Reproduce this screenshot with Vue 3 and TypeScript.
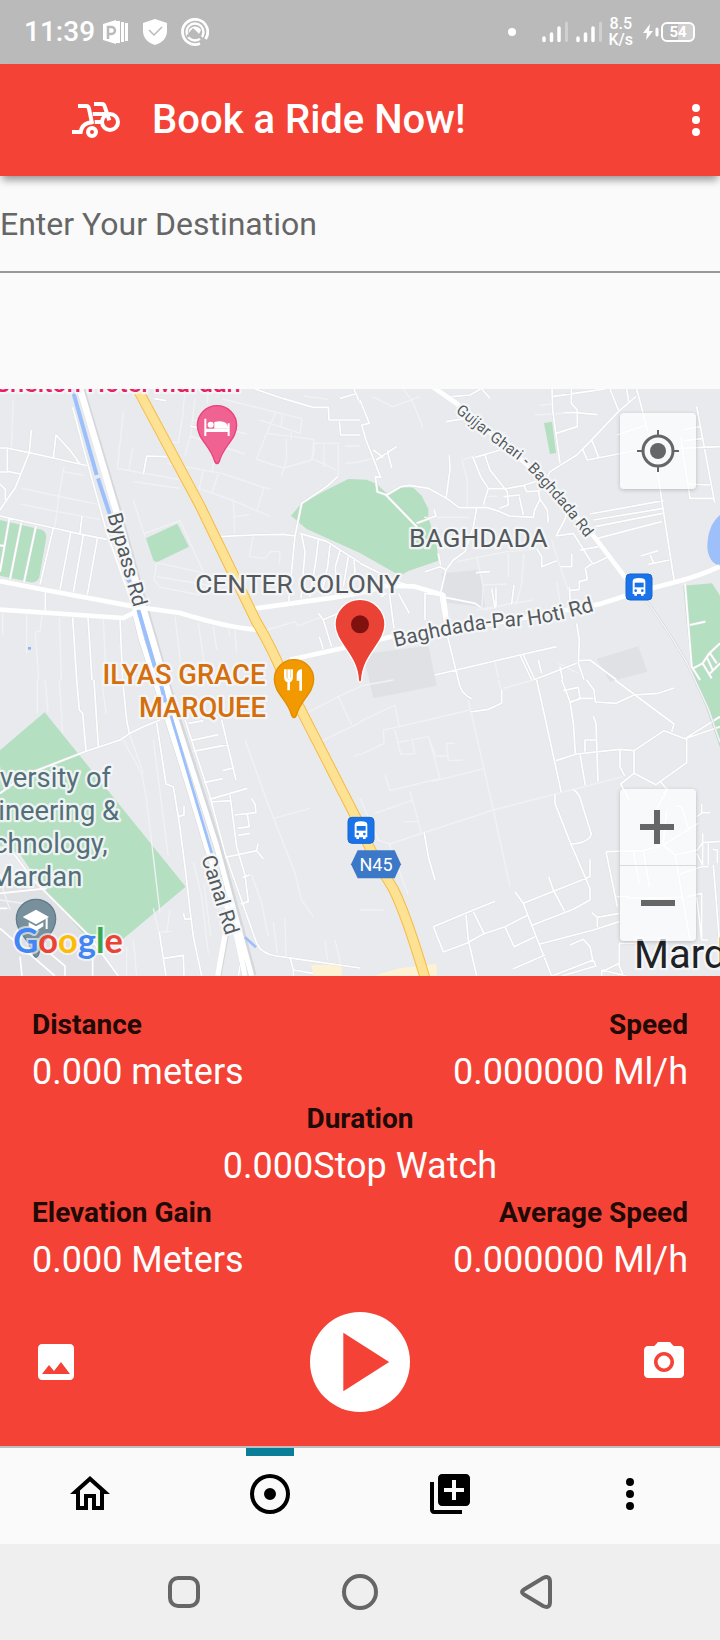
<script setup lang="ts">
import { ref } from 'vue'

interface Stat {
  label: string
  value: string
  place: 'start' | 'center' | 'end'
}

interface Tab {
  name: string
  icon: string
}

interface MapSheet {
  shift: string
  roads: string
  lanes: string
}

const destination = ref('')
const activeTab = ref('Track')

const stats: Stat[] = [
  { label: 'Distance', value: '0.000 meters', place: 'start' },
  { label: 'Speed', value: '0.000000 Ml/h', place: 'end' },
  { label: 'Duration', value: '0.000Stop Watch', place: 'center' },
  { label: 'Elevation Gain', value: '0.000 Meters', place: 'start' },
  { label: 'Average Speed', value: '0.000000 Ml/h', place: 'end' },
]

const moreIcon =
  'M12 8a2 2 0 1 0 0-4 2 2 0 0 0 0 4zm0 2a2 2 0 1 0 0 4 2 2 0 0 0 0-4zm0 6a2 2 0 1 0 0 4 2 2 0 0 0 0-4z'

const tabs: Tab[] = [
  {
    name: 'Home',
    icon: 'M12 5.69l5 4.5V18h-2v-6H9v6H7v-7.81l5-4.5M12 3L2 12h3v8h6v-6h2v6h6v-8h3L12 3z',
  },
  {
    name: 'Track',
    icon: 'M12 2a10 10 0 1 0 0 20 10 10 0 0 0 0-20zm0 18a8 8 0 1 1 0-16 8 8 0 0 1 0 16zm3-8a3 3 0 1 1-6 0 3 3 0 0 1 6 0z',
  },
  {
    name: 'Add',
    icon: 'M4 6H2v14c0 1.1.9 2 2 2h14v-2H4V6zm16-4H8c-1.1 0-2 .9-2 2v12c0 1.1.9 2 2 2h12c1.1 0 2-.9 2-2V4c0-1.1-.9-2-2-2zm-1 9h-4v4h-2v-4H9V9h4V5h2v4h4v2z',
  },
  { name: 'More', icon: moreIcon },
]

// The map is drawn as four adjoining sheets: north-west, north-east, south-west, south-east.
const sheets: MapSheet[] = [
  {
    shift: 'translate(0 -27)',
    roads:
      'M94 150L88 218L45 325L20 360L0 390 M0 204H20L88 218L160 234L265 258 M160 234L168 165L208 208L238 250 M22 204V274L62 282 M0 276H22 M0 312L16 328V360 M0 408L160 444L248 464L320 478 M246 408L240 460 M28 416L0 575 M64 428L30 598 M108 438L72 606 M160 444L120 614 M212 458L180 628 M250 466L220 636 M292 476L262 644 M0 496L14 498 M430 284L440 228L500 230 M136 634V690 M218 712L230 900 M264 714L276 900 M360 716L368 900 M655 470L760 465L850 463L885 468L905 370L980 320L1015 288 M885 468L866 664 M900 460L980 484L1080 548 M905 465L915 515L903 655 M955 480L948 540L930 650 M990 495L983 560L965 640 M1020 512L1006 560L1012 655 M1045 530L1030 620 M1062 540L1066 590 M765 27L850 56L940 82H985L987 120H1080 M1018 125L1022 165H1080 M1062 27L1080 70 M1020 55L1065 42 M955 700L970 720L995 800 M968 720L1015 700 M958 770L970 808 M570 138L600 145 M463 56L498 62',
    lanes:
      'M40 60L34 204 M370 98L352 265L535 298 M398 205L386 272 M350 265L430 280 M400 305L540 325 M500 250L665 280L790 322L812 326 M610 270L598 326L700 362L812 410 M655 282L635 340 M700 362L704 460 M792 322L770 394 M704 410L748 404 M555 27L548 105L535 188L480 186 M625 27L622 70 M585 55L572 165L555 226 M575 118L700 152L740 162 M570 168L735 222 M648 210L635 280 M668 57L905 116 M828 95L800 160L770 238L850 264L935 240L942 178L800 160 M848 100L843 142 M906 115L900 160L780 120 M875 150L873 180 M858 175L860 235L845 288 M940 182L944 214L936 236L1010 270 M910 48L985 58 M940 190H1020 M972 195V262 M1015 195V285 M1035 198H1080 M1035 250L1080 246 M66 325L200 354L300 374 M62 372L168 394L300 418 M192 260L176 350L165 440 M190 275L252 286 M400 360L435 470 M435 460L540 422L610 575 M470 548L605 578 M470 548L462 600L480 622L600 645 M470 590L640 618 M760 465L748 530L795 535L812 515H840L838 550 M525 710L542 850 M595 728L612 845 M640 738L650 810 M685 748L690 770 M705 750L710 815 M800 750L885 725L895 738L965 710 M8 700V765 M80 705V820 M126 707L120 754L106 756L116 900 M178 710L184 900 M310 715L318 900 M360 790L365 850',
  },
  {
    shift: 'translate(1080 -27)',
    roads:
      'M0 60L28 130L5 135L18 180L62 292L46 290L52 335L80 345L122 320L150 316L205 325L262 356L297 383L380 382L420 395L448 408L520 412L524 390L540 358L535 330 M78 345L170 440L150 490 M170 430L228 408L222 388 M48 240L110 200 M40 210L70 232 M82 212L95 264 M268 226L270 270L258 356 M258 125L350 110 M390 55L365 27 M275 50L330 45L362 27 M576 27L578 90L600 250 M634 27V70L652 90V140L588 160 M576 50L680 35L735 27 M610 98H648L712 104 M750 27L775 90 M800 27L806 65 M830 27L860 140L895 290L908 380L943 605 M828 50L775 95L690 185L650 225L570 275L540 330 M696 182L716 232 M668 208L682 240L835 210 M770 165L860 135 M1010 80L1064 368 M955 205L1080 200 M962 170L990 355H1064 M968 150L1020 140 M972 182L1030 175 M980 312L1050 315 M338 230L362 290L385 325L370 375 M375 226L390 270L442 335L445 375L418 385 M345 232L420 210 M385 325L440 326L492 316L540 300 M492 316L500 335L540 333 M430 350L480 345 M478 350L490 405 M540 358L562 390L565 428 M350 385L340 440L315 515L280 540L258 570L240 645L258 750L295 900 M195 575L240 560L258 570 M235 520L242 556 M588 468L640 460L690 540L700 552L750 528 M588 468L614 420L620 398 M660 510L715 500 M690 402L910 362 M700 420L910 385 M705 440L908 400 M712 475L905 425 M842 528L895 512 M870 525L882 550 M865 553L928 540 M530 505L545 530V560L590 542 M600 560H635V522 M695 552L676 565L682 598L658 605V628L628 632 M628 620L632 690 M0 550L100 600L155 620 M88 640L102 745 M62 650L80 640 M115 640L148 700 M62 617L70 650 M195 640V720 M192 640L244 646 M244 650L345 670L362 682 M395 625L405 685 M408 625V680 M348 578L390 575 M462 615L455 672 M225 885L480 825L590 800 M480 825L515 900 M490 825L525 900 M535 840L545 880 M600 860L608 900 M520 900L650 850 M650 730L658 780L655 850L672 900 M655 842L690 840L770 900 M975 610L995 860L1020 900 M990 735L1036 725 M1000 865L1028 850L1048 820L1080 790 M1028 850L1055 895 M1040 830L1058 870 M1050 820L1070 850 M1050 880L1080 850',
    lanes:
      'M38 50L98 80L180 50 M130 27L158 65L188 142 M0 245L40 235 M305 238L322 300V380 M310 238L345 228 M525 105L650 98 M540 75L580 72 M405 170L440 155 M192 412L330 412 M375 380V350L412 348 M290 545L440 515L520 508 M350 530L370 620L365 690 M445 520V590 M492 520L485 610L470 670 M370 615L440 612 M350 690L520 660 M575 480L600 560L632 650 M590 605L600 665 M375 690L470 665 M405 845L415 895 M595 850L655 880',
  },
  {
    shift: 'translate(0 873)',
    roads:
      'M230 0L238 90L248 100L258 212 M282 0L295 200 M368 0L380 120L388 160 M0 340L75 285L258 214L360 180L390 160L430 140L480 120 M470 128L498 312L520 320L538 430L555 560L570 690L580 770L605 888 M535 410L552 405V378 M550 700L555 718L572 716 M722 672L745 665L735 585L710 500L690 345 M565 130L610 122 M572 182L655 164 M580 214L684 194 M665 120L708 300 M668 272L698 264 M612 308L668 296 M628 358L742 325 M632 366L690 362 M704 405L768 398L765 372L754 355 M742 402L748 440L712 445 M714 466L750 460 M675 532L770 512L790 536 M770 512L774 490 M728 592L750 584 M40 520L100 600L265 765L355 888 M0 640L140 625 M0 685H22 M0 745L165 888 M150 820L195 858V888 M60 830L66 888 M278 830V888 M260 765L272 800 M490 835L498 888 M490 835L550 826L552 888 M478 755L482 785L490 835 M715 888L722 850 M870 832L880 870V888 M880 870L940 880 M555 120L630 350L675 520L770 790Q785 822 830 828L900 838L1080 864',
    lanes:
      'M112 0V100 M135 0L144 95 M178 0L188 160 M305 0L318 100 M370 180L425 280L440 360L480 700 M388 160L430 280 M460 180L505 530 M580 545L605 650L625 820 M612 610L632 770 M755 585L785 670L805 770 M735 180L800 360L885 580L905 660L940 710 M820 415L930 385 M820 725L832 820 M855 715L858 830 M975 780L982 840 M1005 780L1022 850 M460 685L482 780 M510 690L500 760 M478 756L515 754 M380 800V888 M400 780L410 888 M915 102L1015 50L1080 20 M1015 50L1055 135 M950 190L1080 128 M1060 230L1080 222 M0 600L30 690 M0 660L140 680',
  },
  {
    shift: 'translate(1080 873)',
    roads:
      'M295 0Q300 40 335 56 M330 96L385 88L425 70V30 M530 0L550 90L604 338 M605 0L630 65L640 130L646 220 M610 32L655 22L660 55L630 68 M680 0L702 30L706 66L768 70L822 45L895 40L942 24 M765 0L942 132L935 155 M630 66L665 55H700 M588 242L650 222L780 208L822 212L912 152L975 176L1080 110 M975 176L1080 140 M980 176V248L888 314L822 280V212 M822 280L782 312L808 358 M902 305L922 330L890 385 M780 210V260L794 288 M700 108L708 130L714 305 M675 215V180H710 M660 222L676 316 M585 342V370L632 490L690 625V660L640 688L518 735 M638 328Q660 340 665 370L694 462Q685 490 632 492 M690 538L690 590L490 670L465 635 M566 590L580 630L614 694 M490 670L505 710L575 888 M220 740L340 690L405 664 M220 740L250 816L320 790L370 762L435 740L505 704 M340 695L372 760 M318 705L325 780L350 888 M435 740L462 800L525 770 M540 792L700 750L778 725 M630 795L670 778L690 800L698 840 M460 866L555 825 M575 888L700 840L708 858L605 888 M695 698L712 712L778 700 M712 712V742 M738 515L850 512L910 495L1015 430 M738 515L772 680 M850 512L868 620 M820 515L838 610 M910 495L945 525L990 780 M945 525L1012 510 M770 650H808 M960 582L1025 560H1046 M980 650L1025 640V780H1045 M945 378L965 380L985 445 M920 390L910 490 M925 325L910 340 M1010 410L1028 398H1050 M1025 372V400 M1010 512L1028 488L1080 484 M1028 460V555 M1010 520L1028 555 M1045 490V555 M1060 555L1078 780 M1058 508L1072 510V550 M1010 650L1025 780 M804 655L965 652 M778 790V850L725 875 M778 790H830 M725 888V870L800 888 M775 850L790 888 M192 455L205 530L225 600',
    lanes:
      'M0 125L105 75L118 140L70 150L72 190L0 225 M0 18L100 0 M105 150L122 222H165L155 175 M110 188L205 170L240 295L90 332L75 285 M205 170L228 228H262 M215 305L375 265 M118 140L330 90 M285 190H260L265 242L308 240 M0 355L55 480L88 492L145 645 M45 400L155 362L150 335 M150 335L185 460 M130 425H175 M88 492L400 390L790 290 M325 60L400 390L450 620 M430 25L520 0 M425 30L415 0 M0 690L70 690',
  },
]

const busStops: string[] = ['translate(1878 555)', 'translate(1044 1285)']
</script>

<template>
  <div class="phone">
    <div class="status">
      <span class="clock">11:39</span>
      <svg class="status-icon" viewBox="0 0 28 28" aria-hidden="true">
        <path d="M2 6l13-4v24L2 22z" fill="#fff" />
        <path d="M15 3h4v22h-4zM20 4h3v20h-3zM24 5h3v18h-3z" fill="#fff" />
        <path d="M7 21V9h3.500a3.500 3.500 0 0 1 0 7H7" fill="none" stroke="#bababa" stroke-width="2.500" />
      </svg>
      <svg class="status-icon shield" viewBox="0 0 28 28" aria-hidden="true">
        <path d="M14 1l12 4v8c0 7-5 12-12 14C7 25 2 20 2 13V5z" fill="#fff" />
        <path d="M8 12l5 5 8-8" fill="none" stroke="#bababa" stroke-width="1.500" />
      </svg>
      <svg class="status-icon" viewBox="0 0 28 28" fill="none" stroke="#fff" aria-hidden="true">
        <path d="M19 25.500A12.600 12.600 0 1 1 24.500 21" stroke-width="2.800" />
        <circle cx="14" cy="14" r="8.500" stroke-width="2.400" />
        <path d="M7 18l6-7 5 5 2-4a7 7 0 0 0-12 0z" fill="#fff" stroke="none" />
        <path d="M6 19l6-7 13 13" stroke="#bababa" stroke-width="2.600" />
      </svg>
      <span class="spacer"></span>
      <span class="dot"></span>
      <svg v-for="n in 2" :key="n" class="signal" viewBox="0 0 26 22" aria-hidden="true">
        <path d="M2 17v2.500M9.500 13v6.500M17 7v12.500" stroke="#fff" stroke-width="3.500" stroke-linecap="round" />
        <path d="M24.500 2v17.500" stroke="#d0d0d0" stroke-width="3" stroke-linecap="round" />
      </svg>
      <span class="rate">8.5<br />K/s</span>
      <svg class="bolt" viewBox="0 0 16 18" aria-hidden="true">
        <path d="M7 1L0 10h4l-1 7 7-9H6z" fill="#fff" />
        <path d="M14 6v6" stroke="#fff" stroke-width="3" stroke-linecap="round" />
      </svg>
      <span class="battery">54</span>
    </div>

    <header class="app-bar">
      <svg class="brand" viewBox="0 0 144 144" fill="none" stroke="#fff" stroke-width="12" aria-hidden="true">
        <path d="M18 30h25q6 0 8 8l9 44M66 24h24q6 0 8 7l14 42" />
        <path d="M62 54h44M68 78h22M0 108h26q4-22 22-27l16-3" />
        <circle cx="114" cy="78" r="24" />
        <circle cx="60" cy="108" r="12" />
      </svg>
      <h1>Book a Ride Now!</h1>
      <button class="plain" type="button" aria-label="Menu">
        <svg class="icon" viewBox="0 0 24 24" fill="#fff"><path :d="moreIcon" /></svg>
      </button>
    </header>

    <main>
      <input
        v-model="destination"
        class="destination"
        type="text"
        placeholder="Enter Your Destination"
        aria-label="Enter Your Destination"
      />

      <section class="map" aria-label="Map">
        <svg class="map-canvas" viewBox="0 0 2160 1761" preserveAspectRatio="xMidYMid slice">
          <defs>
            <path id="bypass" d="M322 378L398 646" />
            <path id="canal" d="M604 1406L676 1636" />
            <path id="gujjar" d="M1366 68L1470 153L1560 218L1600 258L1680 348L1756 444" />
            <path id="hoti" d="M1186 774Q1280 750 1380 732T1560 711T1800 660" />
            <g id="bus">
              <rect width="78" height="78" rx="12" fill="#1a73e8" stroke="#1765cc" stroke-width="3" />
              <path d="M20 60V22q0-10 19-10t19 10v38h-5v5h-8v-5H33v5h-8v-5z" fill="#fff" />
              <path d="M26 26h27v14H26z" fill="#1a73e8" />
              <circle cx="29" cy="50" r="4" fill="#1a73e8" />
              <circle cx="49" cy="50" r="4" fill="#1a73e8" />
            </g>
            <path id="pin" d="M0-59a59 59 0 0 1 59 59C59 42 18 62 7 108q-7 14-14 0C-18 62-59 42-59 0A59 59 0 0 1 0-59z" />
          </defs>

          <g class="park">
            <path d="M0 393L125 422Q142 430 138 450L118 565Q112 582 92 580L0 560z" />
            <path d="M438 448L532 404L567 473L470 520L460 514z" />
            <path
              d="M873 380L906 342L985 300L1045 270L1100 272L1130 285L1165 318L1200 293L1240 296L1265 320L1285 360V385L1310 465L1315 515L1225 546L1200 560L1080 492L920 420z"
            />
            <path d="M1632 102L1656 98L1668 192L1650 195z" />
            <path d="M2050 590L2136 583L2160 620V873H2085L2075 840L2060 700z" />
            <path d="M2085 873H2160V1075L2120 960z" />
            <path d="M0 1084L134 970L557 1493L370 1649L262 1650L130 1500L60 1395L0 1370z" />
          </g>
          <g class="block">
            <path d="M1325 553L1440 542L1455 655L1330 640z" />
            <path d="M1090 795L1285 770L1310 890L1120 928z" />
            <path d="M1790 810L1915 772L1942 848L1830 878z" />
            <path d="M0 1480L80 1440L255 1640L355 1761H0z" />
          </g>
          <path d="M2160 378Q2122 410 2122 475Q2125 520 2160 532z" fill="#9dc0fa" />
          <path d="M934 1728H1025V1761H940zM1130 1757L1200 1738L1310 1724V1761H1130z" fill="#fdf3d4" />
          <path d="M84 774h9v8h-9z" fill="#8ab4f8" />

          <g v-for="sheet in sheets" :key="sheet.shift" :transform="sheet.shift">
            <path class="lane" :d="sheet.lanes" />
            <path class="road-edge" :d="sheet.roads" />
            <path class="road" :d="sheet.roads" />
          </g>

          <path class="trunk-edge" d="M242 0L353 370L433 660L497 880L528 983L583 1153L653 1373L723 1633L757 1761" />
          <path class="trunk-edge slim" d="M402 660L425 753L500 983L560 1173L620 1373L710 1633L735 1761M678 1633L655 1761" />
          <path class="road-edge" d="M218 55L265 230L320 430" />
          <path class="road" d="M218 55L265 230L320 430L402 660" />
          <path class="trunk" d="M240 0L350 370L430 660L495 880L525 983" />
          <path class="trunk slim" d="M525 983L580 1153L650 1373L720 1633L755 1761M402 660L425 753L500 983L560 1173L620 1373L708 1633L735 1761M676 1633L653 1761" />
          <path class="canal" d="M217 0L290 258M294 268L330 378M384 570L390 580M415 663L465 835M484 890L496 940" />
          <path class="canal thin" d="M513 980L572 1180L635 1392M735 1645L768 1675" />

          <g class="main-road">
            <path d="M0 576L120 600L400 652L540 672Q680 715 768 722" />
            <path d="M0 662L370 687L400 672" />
            <path d="M755 660L1000 626L1080 612L1160 590L1240 592L1330 618L1345 735" />
            <path d="M870 812L1040 775L1180 742L1440 710L1800 645L1910 610L2030 578Q2100 560 2160 532" />
            <path d="M1300 -5L1368 42L1620 260L1780 440L1910 610" />
          </g>
          <path d="M1920 610Q1990 700 2060 820L2125 960L2160 1060" fill="none" stroke="#d2d4d7" stroke-width="7" />
          <path d="M1920 610Q1990 700 2060 820L2125 960L2160 1060" fill="none" stroke="#f4f5f6" stroke-width="4" />

          <path class="highway-edge" d="M410 -5L600 350L770 700Q815 775 850 860L1070 1290Q1100 1370 1180 1500Q1220 1580 1276 1770" />
          <path class="highway" d="M410 -5L600 350L770 700Q815 775 850 860L1070 1290Q1100 1370 1180 1500Q1220 1580 1276 1770" />

          <g class="label">
            <text x="722" y="9" text-anchor="end" class="hotel">Shelton Hotel Mardan</text>
            <text class="street"><textPath href="#bypass">Bypass Rd</textPath></text>
            <text class="street"><textPath href="#canal">Canal Rd</textPath></text>
            <text class="street fine"><textPath href="#gujjar">Gujjar Ghari - Baghdada Rd</textPath></text>
            <text class="street"><textPath href="#hoti">Baghdada-Par Hoti Rd</textPath></text>
            <text x="1435" y="475" text-anchor="middle" class="area">BAGHDADA</text>
            <text x="893" y="613" text-anchor="middle" class="area">CENTER COLONY</text>
            <g class="food" text-anchor="end">
              <text x="796" y="886">ILYAS GRACE</text>
              <text x="798" y="985">MARQUEE</text>
            </g>
            <g class="campus" text-anchor="middle">
              <text x="107" y="1193">University of</text>
              <text x="107" y="1292">Engineering &amp;</text>
              <text x="107" y="1391">Technology,</text>
              <text x="107" y="1490">Mardan</text>
            </g>
            <text x="1902" y="1737" class="city">Mardan</text>
          </g>

          <use v-for="stop in busStops" :key="stop" href="#bus" :transform="stop" />
          <path d="M1073 1384H1184L1203 1426L1184 1468H1073L1053 1426z" fill="#3b78c8" />
          <text x="1128" y="1445" text-anchor="middle" class="route">N45</text>

          <g transform="translate(651 109)">
            <use href="#pin" fill="#f06292" stroke="#ec407a" stroke-width="4" />
            <path d="M-38-20h6v30h64v-16h6v38h-6V20h-64v12h-6z" fill="#fff" />
            <circle cx="-19" cy="-2" r="9" fill="#fff" />
            <path d="M-8 10V-10q22-6 34 2 8 6 8 18z" fill="#fff" />
          </g>
          <g transform="translate(882 871)">
            <use href="#pin" fill="#f29900" stroke="#e28a00" stroke-width="4" />
            <path
              d="M-26-30v22q0 12 10 13v28M-7-30v22q0 12-9 13M-16-30V0"
              fill="none" stroke="#fff" stroke-width="8"
            />
            <path d="M8 4v-20q2-14 16-14v64h-8V4z" fill="#fff" />
          </g>
          <g transform="translate(108 1590)">
            <use href="#pin" fill="#78909c" stroke="#607d8b" stroke-width="4" />
            <path d="M-40-6L0-28L39-6L0 16z" fill="#fff" />
            <path d="M-22 10L0 22L22 10V22L0 36L-22 22zM29-2h6v32h-6z" fill="#fff" />
          </g>
          <g transform="translate(1080 706)">
            <path
              d="M0-75a75 75 0 0 1 75 75C75 57 8 90 5 168q-5 12-10 0C-8 90-75 57-75 0A75 75 0 0 1 0-75z"
              fill="#ea4335" stroke="#fff" stroke-width="4"
            />
            <circle r="27" fill="#7f120f" />
          </g>

          <text x="40" y="1691" class="logo">
            <tspan fill="#4285f4">G</tspan><tspan fill="#ea4335">o</tspan><tspan fill="#fbbc04">o</tspan><tspan fill="#4285f4">g</tspan><tspan fill="#34a853">l</tspan><tspan fill="#ea4335">e</tspan>
          </text>
        </svg>

        <button class="map-button locate" type="button" aria-label="My location">
          <svg viewBox="0 0 44 44" fill="none" stroke="#666" stroke-width="3">
            <circle cx="22" cy="22" r="15" />
            <circle cx="22" cy="22" r="8" fill="#666" stroke="none" />
            <path d="M22 1v6M22 37v6M1 22h6M37 22h6" stroke-width="2" />
          </svg>
        </button>
        <div class="zoom">
          <button class="map-button" type="button" aria-label="Zoom in">
            <svg viewBox="0 0 44 44" stroke="#666" stroke-width="6"><path d="M21 5v34M4 22h34" /></svg>
          </button>
          <button class="map-button" type="button" aria-label="Zoom out">
            <svg viewBox="0 0 44 44" stroke="#666" stroke-width="6"><path d="M5 21h34" /></svg>
          </button>
        </div>
      </section>

      <section class="panel">
        <dl class="stats">
          <div v-for="stat in stats" :key="stat.label" :class="['stat', stat.place]">
            <dt>{{ stat.label }}</dt>
            <dd>{{ stat.value }}</dd>
          </div>
        </dl>
        <div class="actions">
          <button class="plain" type="button" aria-label="Gallery">
            <svg class="icon" viewBox="0 0 24 24" fill="#fff">
              <path d="M21 19V5c0-1.100-.9-2-2-2H5c-1.100 0-2 .9-2 2v14c0 1.100.9 2 2 2h14c1.100 0 2-.9 2-2zM8.500 13.500l2.500 3.010L14.500 12l4.500 6H5l3.500-4.500z" />
            </svg>
          </button>
          <button class="play" type="button" aria-label="Start">
            <svg viewBox="0 0 24 24" fill="#f44336"><path d="M8 5v14l11-7z" /></svg>
          </button>
          <button class="plain" type="button" aria-label="Camera">
            <svg class="icon" viewBox="0 0 24 24" fill="#fff">
              <circle cx="12" cy="12" r="3.200" />
              <path d="M9 2L7.170 4H4c-1.100 0-2 .9-2 2v12c0 1.100.9 2 2 2h16c1.100 0 2-.9 2-2V6c0-1.100-.9-2-2-2h-3.170L15 2H9zm3 15c-2.760 0-5-2.240-5-5s2.240-5 5-5 5 2.240 5 5-2.240 5-5 5z" />
            </svg>
          </button>
        </div>
      </section>
    </main>

    <nav class="tabs">
      <button
        v-for="tab in tabs"
        :key="tab.name"
        type="button"
        :class="['tab', { active: tab.name === activeTab }]"
        :aria-label="tab.name"
        @click="activeTab = tab.name"
      >
        <svg class="icon" viewBox="0 0 24 24"><path :d="tab.icon" /></svg>
      </button>
    </nav>

    <div class="system">
      <button class="plain" type="button" aria-label="Recent apps">
        <svg class="icon" viewBox="0 0 48 48"><rect x="10" y="10" width="28" height="28" rx="8" /></svg>
      </button>
      <button class="plain" type="button" aria-label="Home screen">
        <svg class="icon" viewBox="0 0 48 48"><circle cx="24" cy="24" r="16" /></svg>
      </button>
      <button class="plain" type="button" aria-label="Back">
        <svg class="icon" viewBox="0 0 48 48">
          <path d="M12 21.500L31 10q7-3 7 4v20q0 7-7 4L12 26.500q-4-2.500 0-5z" />
        </svg>
      </button>
    </div>
  </div>
</template>

<style>
body {
  margin: 0;
  background: #fafafa;
}
</style>

<style scoped>
.phone {
  display: flex;
  flex-direction: column;
  min-height: 100vh;
  background: #fafafa;
  font-family: Roboto, sans-serif;
}

button {
  padding: 0;
  border: 0;
  background: none;
  cursor: pointer;
}

svg {
  display: block;
}

.icon {
  width: 48px;
  height: 48px;
}

.plain {
  display: flex;
}

.status {
  display: flex;
  align-items: center;
  height: 64px;
  padding: 0 25px 0 24px;
  background: #bababa;
  color: #fff;
}

.clock {
  margin-right: 6px;
  font-size: 28px;
  font-weight: 500;
  line-height: 64px;
}

.status-icon {
  width: 28px;
  height: 28px;
}

.shield {
  margin: 0 12px;
}

.spacer {
  flex: 1;
}

.dot {
  width: 8px;
  height: 8px;
  margin-right: 26px;
  border-radius: 50%;
  background: #fff;
}

.signal {
  width: 26px;
  height: 22px;
  margin-right: 8px;
}

.rate {
  margin-right: 10px;
  margin-left: -2px;
  font-size: 16px;
  font-weight: 500;
  line-height: 16px;
  text-align: center;
}

.bolt {
  width: 16px;
  height: 18px;
  margin-right: 2px;
}

.battery {
  box-sizing: border-box;
  width: 34px;
  height: 20px;
  border: 2px solid #fff;
  border-radius: 6px;
  background: linear-gradient(90deg, #bababa 50%, #d0d0d0 50%);
  font-size: 15px;
  font-weight: 700;
  line-height: 16px;
  text-align: center;
}

.app-bar {
  position: relative;
  display: flex;
  align-items: center;
  height: 112px;
  padding-left: 72px;
  background: #f44336;
  box-shadow: 0 6px 8px -2px rgba(0, 0, 0, 0.4);
  color: #fff;
}

.brand {
  width: 48px;
  height: 48px;
}

h1 {
  flex: 1;
  margin: 0 0 0 32px;
  font-size: 40px;
  font-weight: 500;
  line-height: 50px;
}

.destination {
  box-sizing: border-box;
  display: block;
  width: 100%;
  height: 97px;
  margin: 0 0 116px;
  padding: 0;
  border: 0;
  border-bottom: 2px solid #999;
  border-radius: 0;
  outline: 0;
  background: transparent;
  color: #212121;
  font-family: inherit;
  font-size: 32px;
}

.destination::placeholder {
  color: #666;
  opacity: 1;
}

.map {
  position: relative;
  height: 587px;
  overflow: hidden;
  background: #e8eaed;
}

.map-canvas {
  width: 100%;
  height: 100%;
}

.park {
  fill: #b4dfc1;
}

.block {
  fill: #e0e1e4;
}

.lane,
.road,
.road-edge,
.trunk,
.trunk-edge,
.canal,
.main-road,
.highway,
.highway-edge {
  fill: none;
  stroke-linejoin: round;
}

.lane {
  stroke: #f1f2f4;
  stroke-width: 4;
}

.road-edge {
  stroke: #dfe1e4;
  stroke-width: 8;
}

.road {
  stroke: #fff;
  stroke-width: 5;
}

.trunk-edge {
  stroke: #d5d7da;
  stroke-width: 26;
}

.trunk {
  stroke: #fff;
  stroke-width: 20;
}

.trunk.slim {
  stroke-width: 16;
}

.trunk-edge.slim {
  stroke-width: 19;
}

.canal {
  stroke: #9cc0fb;
  stroke-width: 12;
}

.canal.thin {
  stroke-width: 8;
}

.main-road {
  stroke: #fff;
  stroke-width: 14;
}

.highway-edge {
  stroke: #f6bb42;
  stroke-width: 32;
}

.highway {
  stroke: #fde293;
  stroke-width: 26;
}

.label {
  paint-order: stroke;
  fill: #54595e;
  stroke: rgba(245, 247, 248, 0.9);
  stroke-width: 14px;
  stroke-linejoin: round;
}

.street {
  font-size: 62px;
}

.street.fine {
  font-size: 46px;
}

.area {
  font-size: 79px;
}

.hotel {
  fill: #e91e63;
  font-size: 76px;
  font-weight: 500;
}

.food {
  fill: #d56e0c;
  font-size: 82px;
  font-weight: 500;
}

.campus {
  fill: #546e7a;
  font-size: 82px;
}

.city {
  fill: #202124;
  font-size: 120px;
}

.route {
  fill: #fff;
  font-size: 54px;
}

.logo {
  font-family: Lato, sans-serif;
  font-size: 103px;
  font-weight: 700;
  paint-order: stroke;
  stroke: rgba(255, 255, 255, 0.6);
  stroke-width: 12px;
}

.map-button {
  display: flex;
  align-items: center;
  justify-content: center;
  width: 76px;
  height: 76px;
  background: rgba(255, 255, 255, 0.7);
}

.map-button svg {
  width: 44px;
  height: 44px;
}

.locate {
  position: absolute;
  top: 24px;
  right: 24px;
  border-radius: 4px;
  box-shadow: 0 1px 4px rgba(0, 0, 0, 0.2);
}

.zoom {
  position: absolute;
  right: 24px;
  bottom: 35px;
  overflow: hidden;
  border-radius: 4px;
  box-shadow: 0 1px 4px rgba(0, 0, 0, 0.2);
}

.zoom .map-button + .map-button {
  border-top: 1px solid #d8dadd;
}

.panel {
  padding: 27px 32px 34px;
  background: #f44336;
}

.stats {
  display: grid;
  grid-template-columns: 1fr 1fr;
  margin: 0 0 27px;
}

.stat.center {
  grid-column: 1 / -1;
  text-align: center;
}

.stat.end {
  text-align: right;
}

dt {
  color: #210906;
  font-size: 28px;
  font-weight: 700;
  line-height: 44px;
}

dd {
  margin: 0;
  color: #fff;
  font-size: 36px;
  line-height: 50px;
}

.actions {
  display: flex;
  align-items: center;
  justify-content: space-between;
}

.play {
  width: 100px;
  height: 100px;
  border-radius: 50%;
  background: #fff;
}

.tabs {
  display: grid;
  grid-template-columns: repeat(4, 1fr);
  border-top: 2px solid #bdbdbd;
  background: #fafafa;
}

.tab {
  position: relative;
  display: flex;
  align-items: center;
  justify-content: center;
  height: 96px;
}

.tab svg {
  margin-top: -4px;
}

.tab.active::before {
  position: absolute;
  top: 0;
  width: 48px;
  height: 8px;
  background: #0a7d98;
  content: '';
}

.system {
  display: flex;
  flex: 1;
  align-items: center;
  justify-content: center;
  gap: 128px;
  min-height: 96px;
  background: #efefef;
}

.system svg {
  fill: none;
  stroke: #666;
  stroke-width: 4;
}
</style>
